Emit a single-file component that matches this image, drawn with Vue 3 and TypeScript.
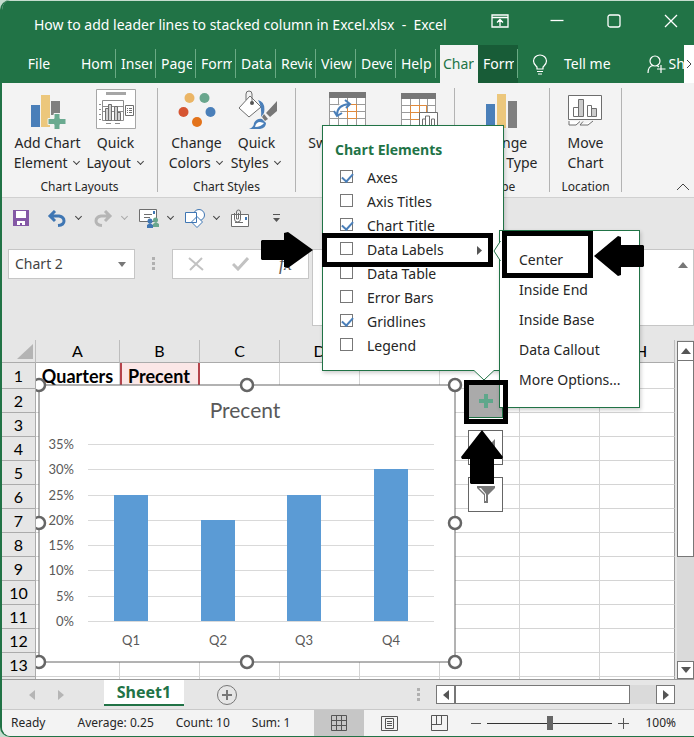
<script setup lang="ts">
import { ref } from 'vue'

interface Option { label: string; on: boolean; sub?: boolean }

const tabs = ['Home', 'Insert', 'Page Layout', 'Formulas', 'Data', 'Review', 'View', 'Developer', 'Help']
const columns = ['A', 'B', 'C', 'D', 'E', 'F', 'G', 'H']
const rows = Array.from({ length: 14 }, (_, i) => i + 1)
const cells: Record<string, string> = { A1: 'Quarters', B1: 'Precent' }

const options = ref<Option[]>([
  { label: 'Axes', on: true },
  { label: 'Axis Titles', on: false },
  { label: 'Chart Title', on: true },
  { label: 'Data Labels', on: false, sub: true },
  { label: 'Data Table', on: false },
  { label: 'Error Bars', on: false },
  { label: 'Gridlines', on: true },
  { label: 'Legend', on: false },
])
const placements = ['Center', 'Inside End', 'Inside Base', 'Data Callout', 'More Options...']

const series = [
  { name: 'Q1', value: 25 },
  { name: 'Q2', value: 20 },
  { name: 'Q3', value: 25 },
  { name: 'Q4', value: 30 },
]
const ticks = [35, 30, 25, 20, 15, 10, 5, 0]
const baseY = 245
const yOf = (v: number) => Math.round(baseY - (v * 177) / 35)
const xOf = (i: number) => Math.round(95 + i * 86.7)
const handles = [
  [3, 9], [211, 9], [419, 9], [3, 147], [419, 147], [3, 286], [211, 286], [419, 286],
]

const boxName = ref('Chart 2')
const formula = ref('')
const zoom = ref(100)
</script>

<template>
  <main class="window">
    <header class="titlebar">
      <h1>How to add leader lines to stacked column in Excel.xlsx&nbsp; -&nbsp; Excel</h1>
      <div class="controls">
        <button aria-label="Ribbon display options">
          <svg width="18" height="14" viewBox="0 0 18 14"><path d="M1 1h16v12H1zM1 3.500h16M9 12V6M6 8.500l3-3 3 3" /></svg>
        </button>
        <button aria-label="Minimize"><svg width="14" height="14" viewBox="0 0 14 14"><path d="M.5 6.500h13" /></svg></button>
        <button aria-label="Maximize"><svg width="14" height="14" viewBox="0 0 14 14"><rect x="1" y="1" width="12" height="12" rx="2" /></svg></button>
        <button aria-label="Close"><svg width="14" height="14" viewBox="0 0 14 14"><path d="M1 1l12 12M13 1L1 13" /></svg></button>
      </div>
    </header>

    <nav class="tabs">
      <button class="file">File</button>
      <button v-for="t in tabs" :key="t" class="tab"><span>{{ t }}</span></button>
      <button class="tab active"><span>Chart Design</span></button>
      <button class="tab context"><span>Format</span></button>
      <button class="tell">
        <svg width="16" height="21" viewBox="0 0 16 21"><path d="M5 15v-2C3 11 1.500 10 1.500 7a6.500 6 0 0 1 13 0c0 3-1.500 4-3.500 6v2zM5 17.500h6M6 20h4" /></svg>
        Tell me
      </button>
      <button class="share">
        <svg width="19" height="19" viewBox="0 0 19 19"><circle cx="8" cy="6" r="5" /><path d="M1 18c0-4 2-7 5-7.500M10 10.500l2 1.500M14 10v8M10 14h8.500" /></svg>
        <span>Share</span>
      </button>
      <button class="more" aria-label="More tabs"><svg width="6" height="10" viewBox="0 0 6 10"><path d="M1 1l4 4-4 4" /></svg></button>
    </nav>

    <section class="ribbon">
      <div class="group g1">
        <div class="buttons">
          <button>
            <svg width="36" height="38" viewBox="0 0 36 38">
              <path fill="#4a7fb9" d="M1 15h9v22H1z" /><path fill="#ecc77c" d="M11 5h9v32h-9z" /><path fill="#7f7f7f" d="M21 11h9v14h-9z" />
              <path fill="#6aaa90" stroke="#f3f3f3" d="M24 23.500h6v5h6v6h-6v6h-6v-6h-6v-6h6z" />
            </svg>
            <span>Add Chart<br />Element <i class="chev"></i></span>
          </button>
          <button>
            <svg width="40" height="40" viewBox="0 0 40 40">
              <path fill="#fff" stroke="#a6a6a6" d="M.5.500h39v39H.5z" /><path fill="#a6a6a6" d="M10 3h20v3H10z" />
              <path fill="none" stroke="#8c8c8c" d="M6.500 11.500h21v20h-21zM3 15.500h2M3 20.500h2M3 25.500h2M3 30.500h2M10 34.500h5M19 34.500h5M7 17.500h20M7 22.500h20" />
              <path fill="#d0d0d0" stroke="#6e6e6e" d="M9.500 19.500h3v12h-3zM12.500 15.500h3v16h-3zM18.500 17.500h3v14h-3zM21.500 23.500h3v8h-3z" />
              <path fill="#fff" stroke="#6e6e6e" d="M29.500 16.500h8v10h-8zM31 19.500h1M31 21.500h1M31 23.500h1M33 19.500h3M33 21.500h3M33 23.500h3" />
            </svg>
            <span>Quick<br />Layout <i class="chev"></i></span>
          </button>
        </div>
        <h2>Chart Layouts</h2>
      </div>
      <div class="group g2">
        <div class="buttons">
          <button>
            <svg width="38" height="38" viewBox="0 0 38 38">
              <circle cx="11.500" cy="8" r="5" fill="#ebb565" /><circle cx="26.500" cy="8" r="5" fill="#69a68d" /><circle cx="5.500" cy="22" r="5" fill="#d65532" />
              <circle cx="32.500" cy="22" r="5" fill="#4a7fb9" /><circle cx="19" cy="32" r="5" fill="#e3731b" />
            </svg>
            <span>Change<br />Colors <i class="chev"></i></span>
          </button>
          <button>
            <svg width="40" height="40" viewBox="0 0 40 40">
              <path fill="#fff" stroke="#6e6e6e" d="M13 7L24 18 12 28 2 19z" /><path fill="none" stroke="#6e6e6e" d="M9 11V5q0-3 3-3t3 3v9" /><circle cx="15" cy="14" r="2" fill="#555" />
              <path fill="#4a7fb9" d="M21 11q8 2 6 13l-3 4q1-10-3-17zM12 40q5-2 5-6 3-5 8-4l4 4q0 5-6 6z" />
              <path fill="#fff" d="M18 38q1-5 5-5l4 1q-3 4-9 4z" /><path fill="#777" d="M40 12v10l-7 6-4-4zM27 25l4 5-3 2-3-4z" />
            </svg>
            <span>Quick<br />Styles <i class="chev"></i></span>
          </button>
        </div>
        <h2>Chart Styles</h2>
      </div>
      <div class="group g3">
        <div class="buttons">
          <button>
            <svg width="38" height="38" viewBox="0 0 38 38">
              <path fill="#fff" stroke="#9a9a9a" d="M.5 3.500h36v34H.5zM9.500 8v30M18.500 8v30M27.500 8v30M1 14.500h36M1 21.500h36M1 28.500h36" /><path fill="#777" d="M0 2h37v6H0z" />
              <path fill="none" stroke="#e08a3c" d="M18.500 14.500h9v14h-9zM18.500 21.500h9" />
              <path fill="none" stroke="#fff" stroke-width="5" d="M8 25q0-10 12-11" />
              <path fill="none" stroke="#4a7fb9" stroke-width="2" d="M8 25q0-10 12-11M16 10l5 4-4 4M5 21l3 5 5-3" />
            </svg>
            <span>Switch Row/<br />Column</span>
          </button>
          <button>
            <svg width="38" height="38" viewBox="0 0 38 38">
              <path fill="#fff" stroke="#9a9a9a" d="M.5 4.500h34v33H.5zM9.500 8v30M18.500 8v30M26.500 8v30M1 15.500h34M1 22.500h34M1 29.500h34" /><path fill="#777" d="M0 3h35v6H0z" />
              <path fill="none" stroke="#e08a3c" d="M9.500 15.500h16v14h-16zM9.500 22.500h16M18.500 15.500v14" />
              <path fill="#fff" stroke="#6e6e6e" d="M18.500 22.500h18v15h-18zM21.500 37v-8h3v8M24.500 37V26h4v11M30.500 37v-8h3v8" />
            </svg>
            <span>Select<br />Data</span>
          </button>
        </div>
        <h2>Data</h2>
      </div>
      <div class="group g4">
        <div class="buttons">
          <button>
            <svg width="32" height="38" viewBox="0 0 32 38"><path fill="#4a7fb9" d="M0 14h9v24H0z" /><path fill="#ecc77c" d="M11 4h9v34h-9z" /><path fill="#7f7f7f" d="M22 11h9v27h-9z" /></svg>
            <span>Change<br />Chart Type</span>
          </button>
        </div>
        <h2>Type</h2>
      </div>
      <div class="group g5">
        <div class="buttons">
          <button>
            <svg width="34" height="38" viewBox="0 0 34 38">
              <path fill="#fff" stroke="#6e6e6e" d="M.5 5.500h33v24H.5zM5.500 17.500h5v9h-5zM19.500 15.500h4v11h-4zM1 31v4h7l4-3.500M12 35h8l5-4M12 35l3-3.500" /><path fill="#ccc" stroke="#6e6e6e" d="M10.500 9.500h5v17h-5zM23.500 18.500h5v8h-5z" />
            </svg>
            <span>Move<br />Chart</span>
          </button>
        </div>
        <h2>Location</h2>
      </div>
      <button class="collapse" aria-label="Collapse the ribbon"><svg width="14" height="8" viewBox="0 0 14 8"><path d="M1 7l6-6 6 6" /></svg></button>
    </section>

    <section class="quick">
      <button aria-label="Save"><svg width="16" height="16" viewBox="0 0 16 16"><path fill="#8458a5" d="M0 0h16v16H0z" /><path fill="#fff" d="M3 1h10v7H3zM4 11h8v4H9v-2H7v2H4z" /></svg></button>
      <button aria-label="Undo"><svg width="20" height="17" viewBox="0 0 20 17"><path fill="none" stroke="#3f76b3" stroke-width="3" d="M3 6h9q5 1 5 5 0 4-6 4.500M8 1L3 6l5 5" /></svg></button>
      <i class="chev"></i>
      <button aria-label="Redo"><svg width="20" height="17" viewBox="0 0 20 17"><path fill="none" stroke="#b5b5b5" stroke-width="3" d="M17 6H8q-5 1-5 5 0 4 6 4.500M12 1l5 5-5 5" /></svg></button>
      <i class="chev pale"></i>
      <button aria-label="Mail merge">
        <svg width="20" height="19" viewBox="0 0 20 19"><path fill="#fff" stroke="#6e6e6e" d="M.5.500h17v12H.5zM5 5.500h8M5 8.500h6" /><path fill="#3f76b3" d="M14 2h2v3h-2z" /><circle cx="11" cy="12" r="2.500" fill="#3f76b3" /><path fill="#3f76b3" d="M8 19v-3l3-2 3 2v3z" /><circle cx="16.500" cy="11" r="2.500" fill="#69a68d" /><path fill="#69a68d" d="M14 18v-3l3-2 3 2v3z" /></svg>
      </button>
      <i class="chev"></i>
      <button aria-label="Shapes"><svg width="20" height="19" viewBox="0 0 20 19"><g fill="#fff" stroke="#3f76b3"><circle cx="14" cy="6" r="5.500" /><path d="M.5 3.500h11v10H.5zM12 7.500l5.500 5.500-5.500 5.500L6.500 13z" /></g></svg></button>
      <i class="chev"></i>
      <button aria-label="Attach to e-mail"><svg width="19" height="19" viewBox="0 0 19 19"><path fill="#fff" stroke="#6e6e6e" d="M.5 5.500h17v12H.5zM4 13.500h8" /><path fill="#3f76b3" d="M14 8h2v3h-2z" /><path fill="none" stroke="#6e6e6e" d="M3.500 4v6q0 3 3 3t3-3V3q0-2-2-2t-2 2v7h2V4" /></svg></button>
      <button aria-label="Customize toolbar"><svg width="7" height="9" viewBox="0 0 7 9"><path fill="#555" d="M0 0h7v1H0zM0 4h7L3.500 8z" /></svg></button>
    </section>

    <section class="formulabar">
      <label class="namebox">
        <input v-model="boxName" aria-label="Name box" />
        <svg width="8" height="5" viewBox="0 0 8 5"><path fill="#777" d="M0 0h8L4 5z" /></svg>
      </label>
      <span class="grip"></span>
      <div class="fx">
        <button aria-label="Cancel"><svg width="16" height="14" viewBox="0 0 16 14"><path fill="none" stroke="#c2c2c2" stroke-width="2" d="M1 1l14 12M14 1L2 13" /></svg></button>
        <button aria-label="Enter"><svg width="17" height="14" viewBox="0 0 17 14"><path fill="none" stroke="#c2c2c2" stroke-width="3" d="M1 7l5 5L16 1" /></svg></button>
        <button class="fn" aria-label="Insert function">fx</button>
      </div>
      <div class="entry">
        <textarea v-model="formula" aria-label="Formula"></textarea>
        <svg width="10" height="6" viewBox="0 0 10 6"><path fill="#777" d="M0 6h10L5 0z" /></svg>
      </div>
    </section>

    <section class="sheet">
      <div class="grid">
        <table>
          <colgroup><col class="c-num" /><col class="c-a" /><col v-for="n in 6" :key="n" class="c-x" /><col /></colgroup>
          <thead>
            <tr><th class="corner"><svg width="16" height="15" viewBox="0 0 16 15"><path fill="#b4b4b4" d="M16 0v15H0z" /></svg></th><th v-for="c in columns" :key="c">{{ c }}</th></tr>
          </thead>
          <tbody>
            <tr v-for="r in rows" :key="r">
              <th>{{ r }}</th>
              <td v-for="c in columns" :key="c" :class="{ picked: c + r === 'B1' }">{{ cells[c + r] }}</td>
            </tr>
          </tbody>
        </table>
        <svg class="chart" width="428" height="296" viewBox="0 0 428 296" role="img" aria-label="Precent by quarter">
          <rect x="3" y="9" width="416" height="277" fill="#fff" stroke="#666" stroke-width="1" />
          <text class="ctitle" x="209" y="42" text-anchor="middle">Precent</text>
          <g v-for="t in ticks" :key="t">
            <path :d="`M52 ${yOf(t)}.5H398`" stroke="#d9d9d9" />
            <text class="axis" x="38" :y="yOf(t) + 5" text-anchor="end">{{ t }}%</text>
          </g>
          <g v-for="(s, i) in series" :key="s.name">
            <rect :x="xOf(i) - 17" :y="yOf(s.value)" width="34" :height="baseY - yOf(s.value)" fill="#5b9bd5" />
            <text class="axis" :x="xOf(i)" y="269" text-anchor="middle">{{ s.name }}</text>
          </g>
          <circle v-for="(h, i) in handles" :key="i" :cx="h[0]" :cy="h[1]" r="6" fill="#fff" stroke="#666" stroke-width="2.500" />
        </svg>
      </div>
      <div class="vscroll">
        <button aria-label="Scroll up"><svg width="10" height="6" viewBox="0 0 10 6"><path d="M0 6h10L5 0z" /></svg></button>
        <div class="thumb"></div>
        <button aria-label="Scroll down"><svg width="10" height="6" viewBox="0 0 10 6"><path d="M0 0h10L5 6z" /></svg></button>
      </div>
    </section>

    <footer>
      <div class="sheetbar">
        <button class="nav" aria-label="Previous sheet"><svg width="6" height="10" viewBox="0 0 6 10"><path d="M6 0v10L0 5z" /></svg></button>
        <button class="nav" aria-label="Next sheet"><svg width="6" height="10" viewBox="0 0 6 10"><path d="M0 0v10l6-5z" /></svg></button>
        <button class="sheettab">Sheet1</button>
        <button class="add" aria-label="New sheet"><svg width="22" height="22" viewBox="0 0 22 22"><circle cx="11" cy="11" r="9.500" /><path d="M11 6v10M6 11h10" stroke-width="2" /></svg></button>
        <span class="grip"></span>
        <div class="hscroll">
          <button aria-label="Scroll left"><svg width="6" height="10" viewBox="0 0 6 10"><path d="M6 0v10L0 5z" /></svg></button>
          <div class="thumb"></div>
          <button aria-label="Scroll right"><svg width="6" height="10" viewBox="0 0 6 10"><path d="M0 0v10l6-5z" /></svg></button>
        </div>
      </div>
      <div class="status">
        <span>Ready</span><span>Average: 0.25</span><span>Count: 10</span><span>Sum: 1</span>
        <div class="views">
          <button class="current" aria-label="Normal view"><svg width="17" height="17" viewBox="0 0 17 17"><path d="M.5.500h15v15H.5zM5.500 0v16M10.500 0v16M0 5.500h16M0 10.500h16" /></svg></button>
          <button aria-label="Page layout view"><svg width="17" height="15" viewBox="0 0 17 15"><path d="M.5.500h16v14H.5zM4.500 2.500h8v10h-8zM6 5.500h5M6 7.500h5M6 9.500h5" /></svg></button>
          <button aria-label="Page break view"><svg width="17" height="16" viewBox="0 0 17 16"><path d="M.5.500h16v15H.5zM.5 9.500h10V.5M5.500.500v9" /></svg></button>
        </div>
        <button class="step" aria-label="Zoom out"><svg width="11" height="11" viewBox="0 0 11 11"><path d="M1 5.500h10" /></svg></button>
        <input v-model="zoom" type="range" min="0" max="200" aria-label="Zoom" />
        <button class="step" aria-label="Zoom in"><svg width="11" height="11" viewBox="0 0 11 11"><path d="M0 5.500h11M5.500 0v11" /></svg></button>
        <output>{{ zoom }}%</output>
      </div>
    </footer>

    <div class="sidetools">
      <button class="plus" aria-label="Chart elements"><svg width="14" height="14" viewBox="0 0 14 14"><path fill="#5fa78b" d="M5 0h4v5h5v4H9v5H5V9H0V5h5z" /></svg></button>
      <button aria-label="Chart styles"><svg width="20" height="20" viewBox="0 0 20 20"><path fill="#777" d="M19 1v8l-8 6-3-3zM7 13l3 3q-2 4-8 3 3-2 5-6z" /></svg></button>
      <button aria-label="Chart filters"><svg width="18" height="17" viewBox="0 0 18 17"><path fill="#777" d="M0 0h18v2l-7 7v8H7V9L0 2z" /><path fill="#fff" d="M2 2h2l5 6v7H8V8z" /></svg></button>
    </div>

    <div class="popup elements">
      <h3>Chart Elements</h3>
      <label v-for="o in options" :key="o.label">
        <input v-model="o.on" type="checkbox" />{{ o.label }}
        <svg v-if="o.sub" width="5" height="9" viewBox="0 0 5 9"><path fill="#555" d="M0 0l5 4.500L0 9z" /></svg>
      </label>
      <svg class="beak" width="20" height="11" viewBox="0 0 20 11"><path fill="#fff" d="M0 0h20v1l-10 9L0 1z" /><path fill="none" stroke="#217346" d="M0 .5L10 10 20 .5" /></svg>
    </div>
    <div class="popup placement">
      <svg class="notch" width="8" height="20" viewBox="0 0 8 20"><path fill="#fff" stroke="#217346" d="M7.500 0L1 10l6.500 10" /></svg>
      <button v-for="p in placements" :key="p">{{ p }}</button>
    </div>

    <i class="mark m1"></i><i class="mark m2"></i><i class="mark m3"></i>
    <svg class="arrow a1" width="52" height="36" viewBox="0 0 52 36"><path d="M1 8h22V1l4-1 25 18-25 18-4-1v-7H1L0 27V9z" /></svg>
    <svg class="arrow a2" width="50" height="40" viewBox="0 0 50 40"><path d="M49 9H27V1l-3-1L0 20l24 20 3-1v-8h22l1-1V10z" /></svg>
    <svg class="arrow a3" width="42" height="55" viewBox="0 0 42 55"><path d="M21 0L0 27l1 2h8v24l1 1h23V29h8l1-2z" /></svg>
  </main>
</template>

<style>
body { background: #c5ddcf; }
</style>

<style scoped>
.window, .window * { box-sizing: border-box; }
.window {
  position: relative; display: flex; flex-direction: column; height: 100vh; overflow: hidden;
  border: solid #217346; border-width: 0 0 1px 2px; border-radius: 10px 0 0 10px; background: #e6e6e6;
  color: #262626; font: 14px/20px "Noto Sans", "Open Sans", sans-serif;
}
button { padding: 0; border: 0; background: none; color: inherit; font: inherit; }
h1, h2, h3 { margin: 0; font-weight: 400; }
svg { display: block; flex: none; }

.titlebar { display: flex; height: 45px; flex: none; background: #217346; color: #fff; border-top: 1px solid #c5ddcf; }
.titlebar h1 { padding: 14px 0 0 32px; font-size: 14px; line-height: 20px; white-space: nowrap; }
.controls { display: flex; margin: 0 -5px 0 auto; height: 40px; }
.controls button { display: grid; place-items: center; width: 57px; }
.controls svg { fill: none; stroke: #fff; stroke-width: 1.3; }

.tabs { display: flex; flex: none; height: 38px; background: #217346; color: #fff; white-space: nowrap; }
.file { width: 74px; }
.tab { display: flex; align-items: center; width: 40px; padding: 0 4px 0 5px; background: linear-gradient(#6aaa84, #6aaa84) right 4px / 1px 29px no-repeat; }
.tab span, .share span { overflow: hidden; }
.tab span { width: 31px; text-align: left; }
.tab.active { width: 38px; margin-left: 4px; padding: 0 3px; background: #f3f3f3; color: #217346; }
.tab.context { background-color: #185c37; }
.tell { display: flex; align-items: center; gap: 16px; margin-left: 14px; }
.tell svg, .share svg { fill: none; stroke: #fff; stroke-width: 1.2; }
.share { display: flex; align-items: center; gap: 3px; flex: 1; min-width: 0; margin-left: 36px; overflow: hidden; }
.more { display: grid; place-items: center; flex: none; width: 10px; background: #fff; }
.more svg { fill: none; stroke: #444; }

.ribbon { display: flex; flex: none; height: 115px; padding: 5px 0; border-bottom: 1px solid #d0d0d0; background: #f3f3f3; }
.group { display: flex; flex-direction: column; height: 104px; border-right: 1px solid #b3b3b3; }
.buttons { display: flex; flex: 1; justify-content: center; }
.buttons button { display: flex; flex-direction: column; align-items: center; height: 86px; white-space: nowrap; }
.buttons button svg { height: 40px; margin: 1px 0 4px; }
.group h2 { font-size: 12px; line-height: 10px; text-align: center; }
.g1 { width: 156px; }
.g1 .buttons { padding-right: 8px; }
.g1 button:first-child { width: 80px; }
.g1 button { width: 56px; }
.g2 { width: 138px; }
.g2 button { width: 60px; }
.g3 { width: 159px; }
.g3 .buttons { padding-right: 4px; }
.g3 button:first-child { width: 94px; }
.g3 button { width: 50px; }
.g4 { width: 95px; }
.g5 { width: 72px; }
.chev { display: inline-block; width: 5px; height: 5px; margin: 0 2px 4px 3px; border: solid #444; border-width: 0 1px 1px 0; transform: rotate(45deg); }
.collapse { margin: auto 4px 0 auto; padding-bottom: 1px; }
.collapse svg { fill: none; stroke: #444; }

.quick { display: flex; align-items: center; flex: none; height: 40px; padding-left: 11px; gap: 9px; }
.quick .chev { flex: none; margin: 0 3px 4px 0; }
.quick .pale { border-color: #aaa; }
.quick button:first-child { margin-right: 9px; }
.quick button:last-child { margin-left: 14px; }

.formulabar { display: flex; align-items: flex-start; flex: none; padding: 11px 0 14px 6px; }
.namebox { display: flex; align-items: center; width: 127px; height: 30px; padding-right: 8px; border: 1px solid #c6c6c6; background: #fff; }
.namebox input { flex: 1; min-width: 0; padding: 0 6px; border: 0; background: none; color: #444; font: inherit; }
.grip { width: 3px; height: 13px; background: repeating-linear-gradient(#b0b0b0 0 3px, transparent 3px 5px); }
.formulabar .grip { margin: 8px 17px; }
.fx { display: flex; width: 137px; height: 30px; border: 1px solid #c6c6c6; background: #fff; }
.fx button { display: grid; place-items: center; flex: 1; }
.fx .fn { color: #555; font: italic 18px/20px "Liberation Serif", serif; }
.entry { display: flex; flex: 1; height: 77px; margin-left: 3px; border: 1px solid #c6c6c6; background: #fff; }
.entry textarea { flex: 1; min-width: 0; border: 0; resize: none; background: none; }
.entry svg { margin: 12px 5px; }

.sheet { display: flex; flex: 1; min-height: 0; border-bottom: 1px solid #9b9b9b; }
.grid { position: relative; flex: 1; min-width: 0; margin-right: 2px; overflow: hidden; }
table { width: 100%; table-layout: fixed; border-collapse: separate; border-spacing: 0; color: #000; }
.c-num { width: 34px; }
.c-a { width: 84px; }
.c-x { width: 80px; }
th, td { height: 24px; padding: 0; border: solid #d4d4d4; border-width: 0 1px 1px 0; font: 18px/20px Lato, "Noto Sans", sans-serif; text-align: center; }
th { border-color: #ababab; background: #e6e6e6; font-size: 16px; }
thead th { height: 23px; border-right-color: #bdbdbd; }
thead th:last-child { padding-left: 8px; }
td { background: #fff; font-weight: 700; }
td:last-child { border-right-color: #9b9b9b; }
tbody tr:first-child > * { height: 26px; }
.corner svg { margin: 0 2px 0 auto; }
.picked { border-right: 2px solid #b5434b; background: #fbe7e7; box-shadow: inset 2px 0 #b5434b; }
.chart { position: absolute; top: 36px; left: 34px; }
.ctitle { fill: #595959; font: 21px Lato, sans-serif; }
.axis { fill: #595959; font: 13px Lato, sans-serif; }

.vscroll { display: flex; flex-direction: column; width: 17px; background: #dadada; }
.vscroll button, .hscroll button { display: grid; place-items: center; flex: none; border: 1px solid #777; background: #fff; }
.vscroll button { height: 20px; margin-top: 1px; }
.vscroll button:last-child { height: 18px; margin-top: auto; }
.vscroll svg, .hscroll svg { fill: #555; }
.thumb { border: 1px solid #777; background: #fff; }
.vscroll .thumb { height: 58%; margin-top: -1px; }

footer { flex: none; }
.sheetbar { display: flex; align-items: center; height: 29px; }
.nav { width: 29px; padding-left: 13px; }
.nav svg { fill: #b5b5b5; }
.nav + .nav { margin-right: 16px; }
.nav:first-child { margin-left: 14px; }
.sheettab { align-self: flex-start; width: 80px; height: 26px; margin-left: 14px; border: solid #217346; border-width: 0 0 2px; background: #fff; color: #217346; font-size: 16px; font-weight: 700; }
.add { margin-left: 32px; }
.add svg { fill: none; stroke: #777; }
.sheetbar .grip { margin-left: auto; }
.hscroll { display: flex; width: 239px; height: 19px; margin: 0 19px 0 16px; background: #dadada; }
.hscroll button { width: 19px; }
.hscroll .thumb { width: 175px; }
.hscroll button:last-child { margin-left: auto; }

.status { display: flex; align-items: center; height: 27px; padding: 0 18px 0 9px; border-top: 1px solid #c9c9c9; background: #f3f3f3; font-size: 12px; white-space: nowrap; }
.status > span { margin-right: 22px; }
.status > span:first-child { margin-right: 32px; }
.views { display: flex; align-self: stretch; margin-left: auto; }
.views button { display: grid; place-items: center; width: 50px; }
.views .current { background: #c6c6c6; }
.status svg { fill: none; stroke: #555; }
.step { margin: 0 6px; }
input[type="range"] { width: 125px; height: 16px; margin: 0; appearance: none; background: linear-gradient(#333, #333) center / 100% 1px no-repeat; }
input[type="range"]::-webkit-slider-thumb { appearance: none; width: 6px; height: 14px; background: #666; }
output { margin-left: 10px; }

.sidetools { position: absolute; top: 383px; left: 466px; display: grid; gap: 12px; }
.sidetools button { display: grid; place-items: center; width: 35px; height: 35px; border: 1px solid #666; background: #fff; }
.sidetools .plus { border-color: #217346; background: #aaa; }

.popup { position: absolute; border: 1px solid #217346; background: #fff; box-shadow: 1px 2px 4px #0003; }
.elements { top: 125px; left: 320px; width: 182px; padding: 14px 21px 12px 12px; }
.elements h3 { margin-bottom: 6px; color: #217346; font: 700 14px/20px "Open Sans", sans-serif; }
.elements label { display: flex; align-items: center; height: 24px; padding-left: 5px; }
.elements input { position: relative; appearance: none; width: 13px; height: 13px; margin: 0 14px 3px 0; border: 1px solid #777; background: #fff; }
.elements input:checked::after { content: ""; position: absolute; top: 0; left: 1px; width: 9px; height: 5px; border: solid #4a7fb9; border-width: 0 0 2px 2px; transform: translateY(2px) rotate(-48deg); }
.elements label svg { margin-left: auto; }
.beak { position: absolute; left: 151px; top: 244px; }
.placement { top: 230px; left: 497px; width: 141px; padding: 14px 0 12px; }
.placement button { display: block; width: 100%; height: 30px; padding-left: 19px; text-align: left; }
.notch { position: absolute; top: 10px; left: -7px; }

.mark { position: absolute; border: 5px solid #000; pointer-events: none; }
.m1 { top: 233px; left: 320px; width: 171px; height: 34px; }
.m2 { top: 231px; left: 500px; width: 91px; height: 47px; }
.m3 { top: 380px; left: 462px; width: 44px; height: 44px; }
.arrow { position: absolute; pointer-events: none; }
.a1 { top: 232px; left: 259px; }
.a2 { top: 236px; left: 592px; }
.a3 { top: 430px; left: 459px; }
</style>
